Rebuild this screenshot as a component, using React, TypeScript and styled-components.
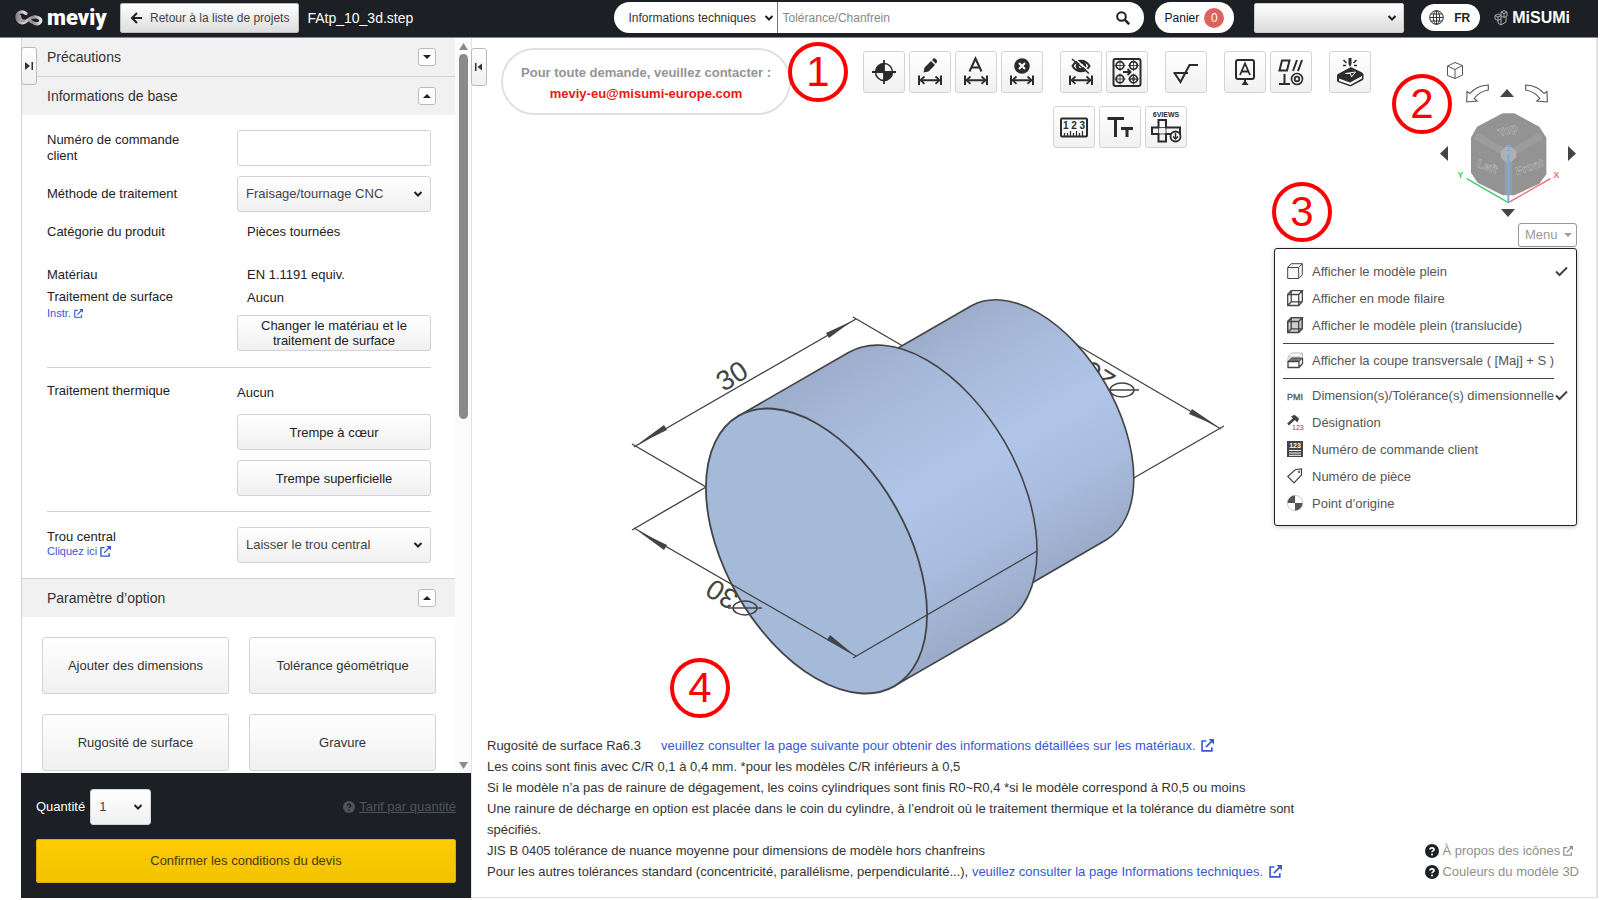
import React from "react";
import styled, { createGlobalStyle } from "styled-components";

const ink = "#1c1f24";
const line = "#d2d2da";
const blue = "#3a57d0";

const GlobalStyle = createGlobalStyle`
  * { box-sizing: border-box; }
  body { margin: 0; background: #fff; color: #333; font: 13px/16px "Liberation Sans", Arial, sans-serif; }
  button, input, select { font: inherit; color: inherit; }
  button { cursor: pointer; }
  svg { display: block; flex: none; }
  h2, p, ul { margin: 0; padding: 0; }
  h2 { font-weight: normal; }
`;

const Page = styled.div`
  min-height: 100vh;
  display: flex;
  flex-direction: column;
  padding: 0 2px 2px 0;
`;

/* ---------- header ---------- */

const Header = styled.header`
  display: flex;
  align-items: center;
  height: 38px;
  padding: 0 28px 2px 15px;
  background: ${ink};
  border-bottom: 1px solid #85868c;
  color: #fff;
`;

const Brand = styled.a`
  display: flex;
  align-items: center;
  gap: 4px;
  width: 105px;
  color: #fff;
  text-decoration: none;
  font: 900 22px/28px Roboto, sans-serif;
`;

const BackButton = styled.button`
  display: flex;
  align-items: center;
  gap: 6px;
  height: 30px;
  padding: 0 9px;
  border: 1px solid #bbb;
  border-radius: 2px;
  background: linear-gradient(#fff, #dcdcdc);
  color: #444;
  font-size: 12px;
  white-space: nowrap;
`;

const FileName = styled.div`
  margin-left: 8px;
  font-size: 14px;
  flex: 1;
`;

const SelectBox = styled.div`
  position: relative;
  display: flex;
  align-items: center;
  > svg { position: absolute; right: 8px; pointer-events: none; }
`;

const Search = styled.form`
  display: flex;
  align-items: center;
  width: 530px;
  height: 31px;
  border-radius: 16px;
  background: #fff;
  color: #333;
  font-size: 12px;
  overflow: hidden;
`;

const SearchScope = styled.select`
  appearance: none;
  width: 164px;
  height: 31px;
  padding: 0 0 0 15px;
  border: 0;
  border-right: 1px solid #777;
  background: none;
`;

const ScopeBox = styled(SelectBox)`
  > svg { right: 4px; }
`;

const SearchInput = styled.input`
  flex: 1;
  min-width: 0;
  height: 29px;
  padding: 0 5px;
  border: 0;
  background: none;
  &::placeholder { color: #888; }
`;

const PlainButton = styled.button`
  display: flex;
  align-items: center;
  justify-content: center;
  padding: 0;
  border: 0;
  background: none;
`;

const SearchButton = styled(PlainButton)`
  width: 42px;
  height: 31px;
`;

const Cart = styled.button`
  display: flex;
  align-items: center;
  gap: 5px;
  height: 31px;
  margin-left: 11px;
  padding: 0 10px;
  border: 0;
  border-radius: 16px;
  background: #fff;
  color: #111;
  font-size: 12px;
`;

const Count = styled.span`
  width: 20px;
  height: 20px;
  border-radius: 10px;
  background: #e06060;
  color: #fff;
  line-height: 20px;
`;

const AccountSelect = styled.select`
  appearance: none;
  width: 150px;
  height: 30px;
  border: 1px solid #ccc;
  border-radius: 2px;
  background: linear-gradient(#fff, #dadada);
`;

const AccountBox = styled(SelectBox)`
  margin: 0 17px 0 20px;
  > svg { right: 7px; }
`;

const Language = styled.button`
  display: flex;
  align-items: center;
  gap: 10px;
  height: 27px;
  padding: 0 10px 0 8px;
  border: 0;
  border-radius: 14px;
  background: #fff;
  color: #222;
  font-size: 12px;
  font-weight: bold;
`;

const Maker = styled.div`
  display: flex;
  align-items: center;
  gap: 4px;
  margin-left: 14px;
  font: bold 16px/24px "Liberation Sans", sans-serif;
`;

/* ---------- side panel ---------- */

const Columns = styled.div`
  flex: 1;
  display: flex;
  padding-left: 21px;
`;

const Side = styled.aside`
  display: flex;
  flex-direction: column;
  width: 450px;
  flex: none;
`;

const Scroller = styled.div`
  flex: 1;
  display: flex;
  position: relative;
  border-left: 1px solid ${line};
`;

const Sections = styled.div`
  flex: 1;
`;

const Scrollbar = styled.div`
  display: flex;
  flex-direction: column;
  align-items: center;
  justify-content: space-between;
  width: 16px;
  padding: 5px 0 4px;
  background: #fbfbfb;
`;

const Thumb = styled.div`
  width: 9px;
  height: 365px;
  margin: 4px 0 auto;
  border-radius: 5px;
  background: #8a8a8a;
`;

const EdgeTab = styled.button`
  display: flex;
  align-items: center;
  justify-content: center;
  width: 16px;
  height: 38px;
  padding: 0;
  border: 1px solid #bbb;
  border-radius: 3px;
  background: linear-gradient(#fff, #f0f0f0);
`;

const SideTab = styled(EdgeTab)`
  position: absolute;
  left: -1px;
  top: 9px;
`;

const SectionHead = styled.div<{ $line?: "top" | "bottom" }>`
  display: flex;
  align-items: center;
  justify-content: space-between;
  height: ${(p) => (p.$line ? 39 : 38)}px;
  padding: 0 19px 0 25px;
  background: #f1f1f1;
  border-bottom: ${(p) => (p.$line === "bottom" ? `1px solid ${line}` : "0")};
  border-top: ${(p) => (p.$line === "top" ? `1px solid ${line}` : "0")};
  h2 { font-size: 14px; }
`;

const Toggle = styled.button`
  display: flex;
  align-items: center;
  justify-content: center;
  width: 18px;
  height: 18px;
  padding: 0;
  border: 1px solid #bbb;
  border-radius: 3px;
  background: #fff;
`;

const Fields = styled.div`
  padding: 15px 24px 15px 25px;
`;

const Field = styled.div<{ $h: number; $pad?: number }>`
  display: grid;
  grid-template-columns: 190px 1fr;
  align-items: start;
  min-height: ${(p) => p.$h}px;
  padding-top: ${(p) => p.$pad || 0}px;
  color: #222;
`;

const Label = styled.label<{ $top?: number }>`
  display: block;
  width: 150px;
  padding-top: ${(p) => p.$top || 0}px;
`;

const Value = styled.div<{ $indent?: boolean; $top?: number }>`
  padding-top: ${(p) => p.$top || 0}px;
  padding-left: ${(p) => (p.$indent ? 10 : 0)}px;
`;

const TextInput = styled.input`
  width: 100%;
  height: 36px;
  border: 1px solid ${line};
  border-radius: 3px;
`;

const Select = styled.select`
  appearance: none;
  width: 100%;
  height: 36px;
  padding: 0 8px;
  border: 1px solid ${line};
  border-radius: 3px;
  background: linear-gradient(#fff, #f0f0f0);
  color: #444;
`;

const Button = styled.button<{ $tall?: boolean }>`
  width: 100%;
  height: ${(p) => (p.$tall ? 57 : 36)}px;
  padding: 0 20px;
  border: 1px solid ${line};
  border-radius: 3px;
  background: linear-gradient(#fff, #f0f0f0);
  line-height: 15px;
`;

const ButtonStack = styled.div<{ $top: number }>`
  display: grid;
  gap: 10px;
  margin-top: ${(p) => p.$top}px;
`;

const Rule = styled.hr`
  height: 1px;
  margin: 0;
  border: 0;
  background: #cfcfd4;
`;

const SmallLink = styled.a<{ $top?: number }>`
  display: flex;
  align-items: center;
  gap: 3px;
  margin-top: ${(p) => p.$top || 0}px;
  color: ${blue};
  font-size: 11px;
  line-height: 13px;
  text-decoration: none;
`;

const Options = styled.div`
  display: grid;
  grid-template-columns: 1fr 1fr;
  gap: 20px;
  padding: 20px 19px 2px 20px;
`;

const Order = styled.div`
  padding: 16px 15px 15px;
  background: ${ink};
  color: #fff;
`;

const OrderRow = styled.div`
  display: flex;
  align-items: center;
  gap: 5px;
  margin-bottom: 14px;
`;

const QtyBox = styled(SelectBox)`
  width: 61px;
  margin-right: auto;
`;

const PriceLink = styled.a`
  display: flex;
  align-items: center;
  gap: 4px;
  color: #505358;
`;

const Confirm = styled.button`
  width: 100%;
  height: 44px;
  border: 1px solid #d9ae00;
  border-radius: 2px;
  background: linear-gradient(#ffcd05, #f3c200);
  color: #443a10;
`;

/* ---------- viewer ---------- */

const Main = styled.main`
  position: relative;
  flex: 1;
  min-width: 0;
  display: flex;
  flex-direction: column;
  border: solid #e2e2ea;
  border-width: 0 2px 1px 1px;
`;

const TopRow = styled.div`
  display: flex;
  align-items: flex-start;
`;

const MainTab = styled(EdgeTab)`
  margin: 10px 14px 0 -1px;
`;

const Contact = styled.div`
  width: 290px;
  height: 67px;
  margin-top: 10px;
  padding: 12px 0;
  border: 2px solid #e0e0e0;
  border-radius: 34px;
  text-align: center;
  font-weight: bold;
  line-height: 21px;
  color: #949494;
  white-space: nowrap;
  a { color: #f01414; text-decoration: none; }
`;

const Tools = styled.div`
  display: flex;
  flex-direction: column;
  align-items: center;
  gap: 13px;
  margin: 13px 0 0 72px;
`;

const ToolRow = styled.div`
  display: flex;
  gap: 17px;
  & + & { padding-left: 6px; }
`;

const ToolGroup = styled.div`
  display: flex;
  gap: 4px;
`;

const Tool = styled.button`
  width: 42px;
  height: 42px;
  padding: 0;
  border: 1px solid #d4d4d4;
  border-radius: 3px;
  background: linear-gradient(#fff, #f1f1f1);
  svg { margin: -1px; }
`;

const Navigator = styled.div`
  display: flex;
  flex-direction: column;
  align-items: center;
  width: 136px;
  margin: 23px 20px 0 auto;
  position: relative;
`;

const HomeButton = styled(PlainButton)`
  align-self: flex-start;
  margin-left: 6px;
`;

const TurnRow = styled.div`
  display: flex;
  align-items: center;
  justify-content: space-between;
  width: 82px;
  height: 20px;
  margin: 3px 2px 8px 0;
`;

const CubeRow = styled.div`
  display: flex;
  align-items: center;
  justify-content: space-between;
  width: 100%;
  margin-bottom: 3px;
  button { padding-bottom: 10px; }
`;

const MenuButton = styled.button`
  display: flex;
  align-items: center;
  justify-content: space-between;
  align-self: flex-end;
  width: 59px;
  height: 24px;
  margin: 6px -1px 0 0;
  padding: 0 4px 0 6px;
  border: 1px solid #999;
  border-radius: 3px;
  background: #fff;
  color: #999;
`;

const Menu = styled.ul`
  position: absolute;
  top: 100%;
  right: -1px;
  width: 303px;
  margin-top: 1px;
  padding: 9px 8px 8px;
  border: 1px solid #222;
  border-radius: 3px;
  background: #fff;
  box-shadow: 0 1px 4px rgba(0, 0, 0, 0.25);
  list-style: none;
  z-index: 2;
`;

const MenuItem = styled.li`
  button {
    display: flex;
    align-items: center;
    width: 100%;
    height: 27px;
    padding: 0 0 0 4px;
    border: 0;
    background: none;
    color: #555;
    text-align: left;
    white-space: nowrap;
  }
  span { width: 247px; margin-left: 8px; }
`;

const MenuRule = styled.li`
  height: 1px;
  margin: 4px 14px 3px 0;
  background: #444;
`;

const Stage = styled.div`
  flex: 1;
  padding: 42px 0 0 128px;
`;

const Footer = styled.footer`
  display: flex;
  align-items: flex-end;
  justify-content: space-between;
  padding: 0 17px 15px 15px;
  line-height: 21px;
`;

const Notes = styled.div`
  max-width: 824px;
  a { color: ${blue}; text-decoration: none; }
  svg { display: inline-block; vertical-align: -2px; margin-left: 2px; }
`;

const Lead = styled.span`
  margin-right: 20px;
`;

const Help = styled.div`
  a {
    display: flex;
    align-items: center;
    gap: 3px;
    color: #8f8f8a;
    text-decoration: none;
  }
`;

const Step = styled.div<{ $x: number; $y: number }>`
  position: absolute;
  left: ${(p) => p.$x}px;
  top: ${(p) => p.$y}px;
  width: 60px;
  height: 60px;
  border: 4px solid #f00;
  border-radius: 50%;
  color: #f00;
  font-size: 42px;
  line-height: 52px;
  text-align: center;
  z-index: 3;
`;

/* ---------- icons ---------- */

const Chevron = () => (
  <svg width="10" height="8" viewBox="0 0 10 8" fill="none" stroke="#222" strokeWidth="2">
    <path d="M1.5 2 5 5.500 8.500 2" />
  </svg>
);

const Tri = ({ dir, w = 10, h = 6, fill = "#222" }: { dir: "up" | "down" | "left" | "right"; w?: number; h?: number; fill?: string }) => {
  const d = {
    up: `M0 ${h}H${w}L${w / 2} 0Z`,
    down: `M0 0H${w}L${w / 2} ${h}Z`,
    left: `M${w} 0V${h}L0 ${h / 2}Z`,
    right: `M0 0V${h}L${w} ${h / 2}Z`,
  }[dir];
  return (
    <svg width={w} height={h} fill={fill}>
      <path d={d} />
    </svg>
  );
};

const External = ({ size = 12, color = blue }: { size?: number; color?: string }) => (
  <svg width={size} height={size} viewBox="0 0 12 12" fill="none" stroke={color} strokeWidth="1.5">
    <path d="M5 1.800H1V11h9V7.500M4.500 7.500 10 2" />
    <path d="M7 0h5v5Z" fill={color} stroke="none" />
  </svg>
);

const Question = ({ size, bg, fg }: { size: number; bg: string; fg: string }) => (
  <svg width={size} height={size} viewBox="0 0 14 14">
    <circle cx="7" cy="7" r="7" fill={bg} />
    <path d="M5 5.500C5 3.200 9 3.200 9 5.500 9 7 7 6.800 7 8.300" fill="none" stroke={fg} strokeWidth="1.700" />
    <circle cx="7" cy="10.600" r="1" fill={fg} />
  </svg>
);

const MeviyMark = () => (
  <svg width="28" height="16" viewBox="0 0 28 16" fill="none">
    <defs>
      <linearGradient id="mark" x1="0" x2="1">
        <stop offset="0" stopColor="#8a8285" />
        <stop offset=".3" stopColor="#e4dfe1" />
        <stop offset=".65" stopColor="#8d8689" />
        <stop offset="1" stopColor="#e9e6e7" />
      </linearGradient>
    </defs>
    <path d="M11 3.500C7 .5 2 2 2 7s5 7.500 9 4.500 6-5 10-4.500 6 3 4 5.500-6 1-9-1" stroke="url(#mark)" strokeWidth="3.200" strokeLinecap="round" />
    <path d="M4.500 5c0 4 2 6.500 6 6" stroke="#a39c9e" strokeWidth="3" />
  </svg>
);

const Globe = () => (
  <svg width="15" height="15" viewBox="0 0 15 15" fill="none" stroke="#333" strokeWidth="1">
    <circle cx="7.500" cy="7.500" r="6.800" />
    <ellipse cx="7.500" cy="7.500" rx="3.200" ry="6.800" />
    <path d="M7.500.7v13.600M.7 7.500h13.600M1.800 4h11.400M1.800 11h11.400" />
  </svg>
);

const MisumiMark = () => (
  <svg width="14" height="17" viewBox="0 0 14 17" fill="none" stroke="#a9abae" strokeWidth="1">
    <path d="M1 6.500 4 5l3 1.500v3.500L4 11.500 1 10ZM1 6.500 4 8l3-1.500M4 8v3.500M7 3l3-1.500L13 3v4l-3 1.500L7 7ZM7 3l3 1.500L13 3M10 4.500v4M4 11.500V14l3 2 5-3V8M7 10v6" />
  </svg>
);

const Check = () => (
  <svg width="13" height="11" viewBox="0 0 13 11" fill="none" stroke="#444" strokeWidth="2">
    <path d="M1 5.500 4.500 9 12 1.500" />
  </svg>
);

const DimArrow = () => (
  <>
    <path d="M10 24.500v9.500M32 24.500v9.500M12 29.200h18" strokeWidth="2" />
    <path d="M15.500 25.500 11.500 29.200l4 3.700M26.500 25.500l4 3.700-4 3.700" strokeWidth="1.800" />
  </>
);

const hole = (x: number, y: number) => (
  <g key={`${x}-${y}`}>
    <circle cx={x} cy={y} r="3.800" strokeWidth="1.800" />
    <path d={`M${x - 5.5} ${y}h11M${x} ${y - 5.5}v11`} strokeWidth=".8" />
  </g>
);

const drawings: Record<string, React.ReactNode> = {
  origin: (
    <>
      <circle cx="21" cy="21" r="8.500" strokeWidth="1.500" />
      <path d="M21 9v24M9 21h24" strokeWidth="1.800" />
      <path d="M21 21v-8.500A8.500 8.500 0 0 0 12.500 21ZM21 21v8.500A8.500 8.500 0 0 0 29.500 21Z" fill="#2b2b2b" stroke="none" />
    </>
  ),
  edit: (
    <>
      <path d="m14.500 21.500 1-5 6.500-6.500 4 4-6.500 6.500ZM23 9l1.500-1.500c1-1 4.500 2 3.500 3.500L26.800 12.800Z" fill="#2b2b2b" stroke="none" />
      <DimArrow />
    </>
  ),
  auto: (
    <>
      <path d="m14.500 20.500 6-13 6 13M17 16.500h7.500" strokeWidth="2" />
      <DimArrow />
    </>
  ),
  remove: (
    <>
      <circle cx="21" cy="15" r="7.800" fill="#2b2b2b" stroke="none" />
      <path d="m18 12 6 6M24 12l-6 6" stroke="#fff" strokeWidth="2" />
      <DimArrow />
    </>
  ),
  hide: (
    <>
      <path d="M12.500 15c4-7 13-7 17 0-4 7-13 7-17 0Z" strokeWidth="2" />
      <circle cx="21" cy="15" r="3.800" strokeWidth="3" />
      <path d="m14 7 16 14" stroke="#fafafa" strokeWidth="1.500" />
      <path d="m12 8 17 14.500" strokeWidth="1.600" />
      <DimArrow />
    </>
  ),
  pattern: (
    <>
      <rect x="7.500" y="8" width="27" height="27" rx="2" strokeWidth="2" />
      {hole(14, 14.5)}
      {hole(27.5, 14.5)}
      {hole(14, 28)}
      {hole(27.5, 28)}
      <circle cx="27.500" cy="28" r="1.500" />
      <path d="M17 21h7M21.500 18l3 3-3 3" strokeWidth="2" />
    </>
  ),
  rough: <path d="M8.500 22h14.500M9.500 22l6 9 9-17H33" strokeWidth="2" />,
  label: (
    <>
      <rect x="12" y="9" width="18" height="19" rx="2" strokeWidth="2" />
      <path d="m16 24 5-11.500 5 11.500M18 20.500h6" strokeWidth="1.800" />
      <path d="M21 28v3" strokeWidth="2" />
      <path d="M17.500 34h7L21 29Z" fill="#2b2b2b" stroke="none" />
    </>
  ),
  gdt: (
    <>
      <path d="M9.500 19.500 12 9.500h7.500L17 19.500ZM23 20l4-11M28 20l4-11M9 33h11M14.500 23v10" strokeWidth="2" />
      <circle cx="27" cy="28" r="5.500" strokeWidth="1.600" />
      <circle cx="27" cy="28" r="2.300" strokeWidth="1.800" />
    </>
  ),
  engrave: (
    <>
      <path d="M8 24.500Q8 23.500 9 23L21 16.500Q22 16 23 16.500L33 21.500Q34.500 22.300 34.500 23.500V27.500Q34.500 28.500 33.500 29.200L22.500 35Q21.500 35.500 20 35L9 31Q8 30.500 8 29.500Z" fill="#2b2b2b" stroke="none" />
      <path d="m10 27.500 11 4 12-6.500v2.500L21.500 34 10 30Z" fill="#f5f5f5" stroke="none" />
      <path d="m16.500 22.500 10-1.500-4 5-1-3.500Z" stroke="#f5f5f5" strokeWidth="1" />
      <path d="m14.500 9 3 3M27.500 9l-3 3M14 14.500h3M25 14.500h3" strokeWidth="1.600" />
      <path d="M19.500 7h3v6L21 16l-1.500-3Z" fill="#2b2b2b" stroke="none" />
    </>
  ),
  ruler: (
    <>
      <rect x="8" y="12.500" width="26" height="18" rx="1" strokeWidth="2" />
      <path d="M11.500 30v-3M14.500 30v-3M17.500 30v-5M20.500 30v-3M23.500 30v-5M26.500 30v-3M29.500 30v-5" strokeWidth="1.200" />
      <text x="21" y="23" fontSize="10" fontWeight="bold" textAnchor="middle" fill="#2b2b2b" stroke="none">1 2 3</text>
    </>
  ),
  text: <path d="M8.500 12.500h16.500M16.500 12.500v18.500M22 22.500h12M28 22.500V31" strokeWidth="3" />,
  views: (
    <>
      <text x="21" y="11" fontSize="7" fontWeight="bold" textAnchor="middle" fill="#2b2b2b" stroke="none">6VIEWS</text>
      <path d="M13.500 14h7.500v7.500h14V28H21v7.500h-7.500V28H7v-6.500h6.500Z" strokeWidth="2" />
      <path d="M13.500 21.500H21V28h-7.500Z" strokeWidth=".8" />
      <circle cx="30.500" cy="30.500" r="5" fill="#fafafa" strokeWidth="1.800" />
      <path d="M30.500 27v6M28 30.500l2.500 2.500 2.500-2.500" strokeWidth="1.500" />
    </>
  ),
};

const ToolIcon = ({ name, title }: { name: string; title: string }) => (
  <Tool aria-label={title}>
    <svg width="42" height="42" viewBox="0 0 42 42" fill="none" stroke="#2b2b2b">{drawings[name]}</svg>
  </Tool>
);

const toolRows = [
  [
    [["origin", "Origine"], ["edit", "Modifier la dimension"], ["auto", "Dimension automatique"], ["remove", "Supprimer la dimension"]],
    [["hide", "Masquer"], ["pattern", "Motif"]],
    [["rough", "Rugosité"]],
    [["label", "Annotation"], ["gdt", "Tolérance géométrique"]],
    [["engrave", "Gravure"]],
  ],
  [[["ruler", "Mesurer"], ["text", "Texte"], ["views", "6 vues"]]],
];

const box = "M.7 4.500h11v11H.7ZM.7 4.500 4.200.7h11.100L11.700 4.500M15.300.7v11.100L11.700 15.500";
const outline = "M.7 4.500 4.200.7h11.100v11.100L11.700 15.500H.7Z";
const inner = "M4.200.7v11.100h11.100M4.200 11.800.7 15.500";

const menuIcons: Record<string, React.ReactNode> = {
  solid: <path d={box} fill="#f8f8f8" />,
  wire: <path d={box + inner} strokeWidth="1.300" />,
  clear: (
    <>
      <path d={outline} fill="#ccc" />
      <path d={box + inner} strokeWidth="1.300" />
    </>
  ),
  cut: (
    <>
      <path d="M1 5 4.500 1h11v6M1 5h11L15.500 1M1 5v3" stroke="#bbb" />
      <path d="M1 9.500 4.500 6h11L12 9.500Z" fill="#777" />
      <path d="M1 9.500h11v6H1ZM15.500 6v5.500L12 15.500" strokeWidth="1.300" />
    </>
  ),
  pmi: <text x="0" y="13" fontSize="9" fill="#555" stroke="#555" strokeWidth=".3">PMI</text>,
  tag: (
    <>
      <path d="M1 10.500 8 4" strokeWidth="2.500" />
      <path d="M4 2.500 7.500.7 12 4.500 10.500 8.500 5 3.500Z" fill="#444" stroke="none" />
      <text x="5" y="16" fontSize="7" fill="#555" stroke="none">123</text>
    </>
  ),
  order: (
    <>
      <rect x="0" y="0" width="16" height="16" fill="#444" stroke="none" />
      <text x="8" y="7" fontSize="7" fontWeight="bold" textAnchor="middle" fill="#fff" stroke="none">123</text>
      <path d="M2 9.500h12M2 12h12M2 14.300h12" stroke="#fff" />
    </>
  ),
  part: (
    <>
      <path d="M.8 8.500 8.500 1.500 14.500 1v6L7 15Z" strokeWidth="1.200" />
      <circle cx="12" cy="3.800" r=".8" />
    </>
  ),
  point: (
    <>
      <circle cx="8" cy="8" r="7.700" stroke="#ccc" fill="#fff" />
      <path d="M8 8V.5A7.500 7.500 0 0 0 .5 8ZM8 8v7.500A7.500 7.500 0 0 0 15.500 8Z" fill="#555" stroke="none" />
    </>
  ),
};

const menu: ([string, string, boolean?] | null)[] = [
  ["solid", "Afficher le modèle plein", true],
  ["wire", "Afficher en mode filaire"],
  ["clear", "Afficher le modèle plein (translucide)"],
  null,
  ["cut", "Afficher la coupe transversale ( [Maj] + S )"],
  null,
  ["pmi", "Dimension(s)/Tolérance(s) dimensionnelle", true],
  ["tag", "Désignation"],
  ["order", "Numéro de commande client"],
  ["part", "Numéro de pièce"],
  ["point", "Point d’origine"],
];

const TurnArrow = ({ flip }: { flip?: boolean }) => (
  <svg width="23" height="19" viewBox="0 0 23 19" fill="none" stroke="#555" strokeWidth="1.100">
    <path transform={flip ? "matrix(-1 0 0 1 23 0)" : undefined} d="M22.300 1C14.500 1.500 8 4.500 4 9.500L1 7.500.7 18l10.500-1-3-2.500C11.500 10 16.500 7 22.300 6Z" />
  </svg>
);

const ViewCube = () => (
  <svg width="107" height="95" viewBox="642 215 321 285" fontFamily="Liberation Sans">
    <path d="M785 222h35l75 40 21 33v110l-21 28-75 35h-35l-75-38-20-30V295l18-33Z" fill="#939393" />
    <g stroke="#9c9c9c" strokeWidth="22">
      <path d="M802 345 704 289M802 345 902 289M802 345V466" />
    </g>
    <path d="M793 322h18l15 14v18l-15 14h-18l-14-14v-18Z" fill="#b0b0b0" />
    <g fontSize="34" fontWeight="bold" fill="#8b8b8b" stroke="#bdbdbd" strokeWidth="1.500" textAnchor="middle">
      <text transform="translate(804 283) rotate(-20)">Top</text>
      <text transform="translate(735 392) rotate(20)">Left</text>
      <text transform="translate(869 394) rotate(-20)">Front</text>
    </g>
    <g strokeWidth="4" fill="none">
      <path d="M802 490 677 418" stroke="#3ecb6c" />
      <path d="M802 490 928 418" stroke="#f36a6a" />
      <path d="M802 488V345" stroke="#6fb0f5" strokeWidth="6" />
    </g>
    <g fontSize="26" fontWeight="bold" textAnchor="middle">
      <text x="658" y="417" fill="#3ecb6c">Y</text>
      <text x="946" y="417" fill="#f36a6a">X</text>
      <text x="803" y="334" fill="#6fb0f5">Z</text>
    </g>
  </svg>
);

const Diameter = ({ x, y }: { x: number; y: number }) => (
  <g fill="none" stroke="#444" strokeWidth="1.500">
    <ellipse cx={x} cy={y} rx="12" ry="7" />
    <path d={`M${x - 17} ${y}h34`} />
  </g>
);

const Model = () => (
  <svg width="640" height="420" viewBox="600 290 640 420" fontFamily="Liberation Sans" role="img" aria-label="Modèle 3D">
    <defs>
      <linearGradient id="big" gradientUnits="userSpaceOnUse" x1="848" y1="353" x2="1004" y2="623">
        <stop offset="0" stopColor="#9dadcc" />
        <stop offset=".2" stopColor="#a7b9db" />
        <stop offset=".5" stopColor="#b0c5e8" />
        <stop offset=".75" stopColor="#a9bcdf" />
        <stop offset="1" stopColor="#9babc9" />
      </linearGradient>
      <linearGradient id="small" gradientUnits="userSpaceOnUse" x1="971" y1="307" x2="1106" y2="541">
        <stop offset="0" stopColor="#9dadcc" />
        <stop offset=".2" stopColor="#a7b9db" />
        <stop offset=".5" stopColor="#b0c5e8" />
        <stop offset=".75" stopColor="#a9bcdf" />
        <stop offset="1" stopColor="#9babc9" />
      </linearGradient>
    </defs>
    <g fontSize="28" fill="#444" textAnchor="middle">
      <text transform="translate(737 385) rotate(-32)">30</text>
      <text transform="translate(727 587) rotate(212)">30</text>
      <text transform="translate(1104 369) rotate(212)">26</text>
    </g>
    <Diameter x={1122} y={391} />
    <g stroke="#444" strokeWidth="1.400" fill="none">
      <path d="M632 445 706 488 632 531M853 318l60 35M634 448 856 320M1070 342 1221 430M1224 427 1125 484" />
      <path d="M971 307 859 371.500 994 606 1106 541A134 77 60 0 0 971 307Z" fill="url(#small)" strokeWidth="1.600" />
      <path d="M738.500 417 848.500 353.500A155 90 60 0 1 1004.500 623.500L894.500 687Z" fill="url(#big)" strokeWidth="1.600" />
      <ellipse cx="816.500" cy="552" rx="156" ry="90.500" transform="rotate(60 816.500 552)" fill="#a5b9d9" strokeWidth="1.800" />
      <path d="M634 529 856 657M853 659l184-107" />
    </g>
    <Diameter x={745} y={609} />
    <g fill="#444">
      <path d="M638 445 664 426 667 431ZM852 322 826 334 829 339ZM638 532 667 546 664 551ZM853 655 827 641 830 636ZM1217 427 1189 415 1192 410Z" />
    </g>
  </svg>
);

export default function App() {
  return (
    <Page>
      <GlobalStyle />
      <Header>
        <Brand href="#" aria-label="meviy"><MeviyMark />meviy</Brand>
        <BackButton>
          <svg width="14" height="12" viewBox="0 0 14 12" fill="none" stroke="#222" strokeWidth="2"><path d="M7 1 2 6l5 5M2 6h10" /></svg>
          <span>Retour à la liste de projets</span>
        </BackButton>
        <FileName>FAtp_10_3d.step</FileName>
        <Search>
          <ScopeBox>
            <SearchScope aria-label="Domaine de recherche"><option>Informations techniques</option></SearchScope>
            <Chevron />
          </ScopeBox>
          <SearchInput aria-label="Rechercher" placeholder="Tolérance/Chanfrein" />
          <SearchButton type="button" aria-label="Lancer la recherche">
            <svg width="14" height="14" viewBox="0 0 14 14" fill="none" stroke="#222" strokeWidth="2"><circle cx="5.500" cy="5.500" r="4.300" /><path d="m8.700 8.700 4.500 4.500" strokeWidth="2.600" /></svg>
          </SearchButton>
        </Search>
        <Cart>Panier<Count>0</Count></Cart>
        <AccountBox><AccountSelect aria-label="Compte" /><Chevron /></AccountBox>
        <Language><Globe />FR</Language>
        <Maker><MisumiMark />MiSUMi</Maker>
      </Header>

      <Columns>
        <Side>
          <Scroller>
            <Sections>
              <SectionHead $line="bottom">
                <h2>Précautions</h2>
                <Toggle aria-label="Déplier Précautions"><Tri dir="down" w={8} h={4} /></Toggle>
              </SectionHead>
              <SectionHead>
                <h2>Informations de base</h2>
                <Toggle aria-label="Replier Informations de base"><Tri dir="up" w={8} h={4} /></Toggle>
              </SectionHead>
              <Fields>
                <Field $h={46}>
                  <Label htmlFor="order" $top={2}>Numéro de commande client</Label>
                  <TextInput id="order" />
                </Field>
                <Field $h={48}>
                  <Label htmlFor="method" $top={10}>Méthode de traitement</Label>
                  <SelectBox><Select id="method"><option>Fraisage/tournage CNC</option></Select><Chevron /></SelectBox>
                </Field>
                <Field $h={43}>
                  <div>Catégorie du produit</div>
                  <Value $indent>Pièces tournées</Value>
                </Field>
                <Field $h={22}>
                  <div>Matériau</div>
                  <Value $indent>EN 1.1191 equiv.</Value>
                </Field>
                <Field $h={78}>
                  <div>
                    Traitement de surface
                    <SmallLink href="#" $top={2}>Instr. <External size={9} /></SmallLink>
                  </div>
                  <div>
                    <Value $indent $top={1}>Aucun</Value>
                    <ButtonStack $top={9}><Button>Changer le matériau et le traitement de surface</Button></ButtonStack>
                  </div>
                </Field>
                <Rule />
                <Field $h={143} $pad={15}>
                  <div>Traitement thermique</div>
                  <div>
                    <Value $top={2}>Aucun</Value>
                    <ButtonStack $top={13}>
                      <Button>Trempe à cœur</Button>
                      <Button>Trempe superficielle</Button>
                    </ButtonStack>
                  </div>
                </Field>
                <Rule />
                <Field $h={51} $pad={15}>
                  <div>
                    <Label htmlFor="hole" $top={2}>Trou central</Label>
                    <SmallLink href="#">Cliquez ici <External size={11} /></SmallLink>
                  </div>
                  <SelectBox><Select id="hole"><option>Laisser le trou central</option></Select><Chevron /></SelectBox>
                </Field>
              </Fields>
              <SectionHead $line="top">
                <h2>Paramètre d’option</h2>
                <Toggle aria-label="Replier Paramètre d’option"><Tri dir="up" w={8} h={4} /></Toggle>
              </SectionHead>
              <Options>
                <Button $tall>Ajouter des dimensions</Button>
                <Button $tall>Tolérance géométrique</Button>
                <Button $tall>Rugosité de surface</Button>
                <Button $tall>Gravure</Button>
              </Options>
            </Sections>
            <Scrollbar>
              <Tri dir="up" w={9} h={7} fill="#8a8a8a" />
              <Thumb />
              <Tri dir="down" w={9} h={7} fill="#8a8a8a" />
            </Scrollbar>
            <SideTab aria-label="Agrandir le panneau">
              <svg width="8" height="8"><path d="M0 0v8l5-4ZM6.500 0H8v8H6.500Z" fill="#333" /></svg>
            </SideTab>
          </Scroller>
          <Order>
            <OrderRow>
              <label htmlFor="qty">Quantité</label>
              <QtyBox><Select id="qty"><option>1</option></Select><Chevron /></QtyBox>
              <PriceLink href="#"><Question size={12} bg="#505358" fg={ink} />Tarif par quantité</PriceLink>
            </OrderRow>
            <Confirm>Confirmer les conditions du devis</Confirm>
          </Order>
        </Side>

        <Main>
          <TopRow>
            <MainTab aria-label="Réduire le panneau">
              <svg width="8" height="8"><path d="M7 0.500v7L2.500 4ZM0 0h1.500v8H0Z" fill="#333" /></svg>
            </MainTab>
            <Contact>
              <p>Pour toute demande, veuillez contacter :</p>
              <a href="mailto:meviy-eu@misumi-europe.com">meviy-eu@misumi-europe.com</a>
            </Contact>
            <Tools>
              {toolRows.map((groups, r) => (
                <ToolRow key={r}>
                  {groups.map((group, g) => (
                    <ToolGroup key={g}>
                      {group.map(([name, title]) => <ToolIcon key={name} name={name} title={title} />)}
                    </ToolGroup>
                  ))}
                </ToolRow>
              ))}
            </Tools>
            <Navigator>
              <HomeButton aria-label="Vue initiale">
                <svg width="18" height="19" viewBox="0 0 18 19" fill="none" stroke="#555"><path d="M1.500 5 9 1.500 16.500 4.500V14L9 17.500 1.500 14.500ZM1.500 5 9 8.500 16.500 4.500M9 8.500v9" /></svg>
              </HomeButton>
              <TurnRow>
                <PlainButton aria-label="Tourner à gauche"><TurnArrow /></PlainButton>
                <PlainButton aria-label="Vers le haut"><Tri dir="up" w={14} h={8} fill="#444" /></PlainButton>
                <PlainButton aria-label="Tourner à droite"><TurnArrow flip /></PlainButton>
              </TurnRow>
              <CubeRow>
                <PlainButton aria-label="Vers la gauche"><Tri dir="left" w={8} h={15} fill="#444" /></PlainButton>
                <ViewCube />
                <PlainButton aria-label="Vers la droite"><Tri dir="right" w={8} h={15} fill="#444" /></PlainButton>
              </CubeRow>
              <PlainButton aria-label="Vers le bas"><Tri dir="down" w={14} h={8} fill="#444" /></PlainButton>
              <MenuButton aria-expanded="true">Menu <Tri dir="down" w={8} h={4} fill="#999" /></MenuButton>
              <Menu>
                {menu.map((item, i) =>
                  item ? (
                    <MenuItem key={i}>
                      <button>
                        <svg width="17" height="17" viewBox="0 0 17 17" fill="none" stroke="#444">{menuIcons[item[0]]}</svg>
                        <span>{item[1]}</span>
                        {item[2] && <Check />}
                      </button>
                    </MenuItem>
                  ) : (
                    <MenuRule key={i} role="separator" />
                  )
                )}
              </Menu>
            </Navigator>
          </TopRow>

          <Stage><Model /></Stage>

          <Footer>
            <Notes>
              <p>
                <Lead>Rugosité de surface Ra6.3</Lead>
                <a href="#">veuillez consulter la page suivante pour obtenir des informations détaillées sur les matériaux. <External size={13} /></a>
              </p>
              <p>Les coins sont finis avec C/R 0,1 à 0,4 mm. *pour les modèles C/R inférieurs à 0,5</p>
              <p>Si le modèle n’a pas de rainure de dégagement, les coins cylindriques sont finis R0~R0,4 *si le modèle correspond à R0,5 ou moins</p>
              <p>Une rainure de décharge en option est placée dans le coin du cylindre, à l’endroit où le traitement thermique et la tolérance du diamètre sont spécifiés.</p>
              <p>JIS B 0405 tolérance de nuance moyenne pour dimensions de modèle hors chanfreins</p>
              <p>
                Pour les autres tolérances standard (concentricité, parallélisme, perpendicularité...),{" "}
                <a href="#">veuillez consulter la page Informations techniques. <External size={13} /></a>
              </p>
            </Notes>
            <Help>
              <a href="#"><Question size={14} bg={ink} fg="#fff" />À propos des icônes <External size={10} color="#8f8f8a" /></a>
              <a href="#"><Question size={14} bg={ink} fg="#fff" />Couleurs du modèle 3D</a>
            </Help>
          </Footer>

          <Step $x={316} $y={4}>1</Step>
          <Step $x={920} $y={36}>2</Step>
          <Step $x={800} $y={144}>3</Step>
          <Step $x={198} $y={620}>4</Step>
        </Main>
      </Columns>
    </Page>
  );
}
